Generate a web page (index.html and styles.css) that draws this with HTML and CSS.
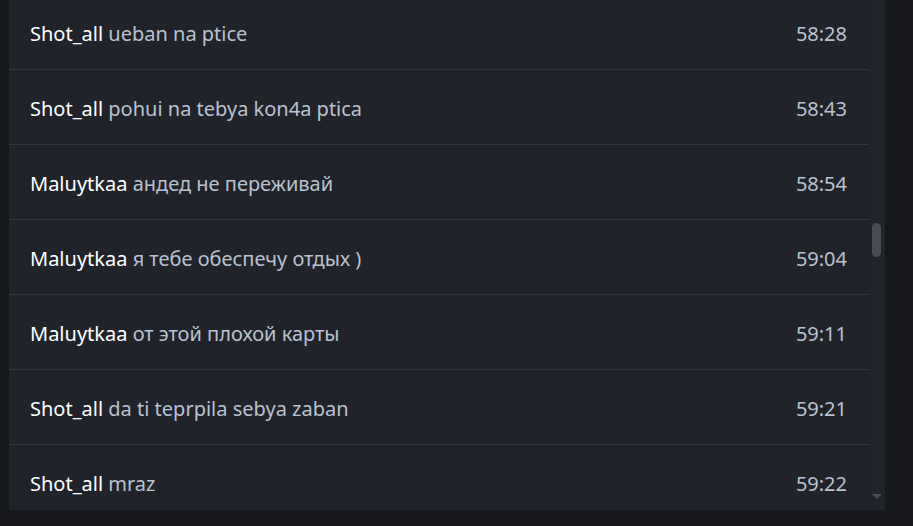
FILE: index.html
```html
<!DOCTYPE html>
<html>
<head>
<meta charset="utf-8">
<link rel="stylesheet" href="styles.css">
</head>
<body>
<div class="panel">
  <div class="list">
    <div class="row"><div class="msg"><span class="name">Shot_all</span> <span class="text">ueban na ptice</span></div><span class="time">58:28</span></div>
    <div class="row"><div class="msg"><span class="name">Shot_all</span> <span class="text">pohui na tebya kon4a ptica</span></div><span class="time">58:43</span></div>
    <div class="row"><div class="msg"><span class="name">Maluytkaa</span> <span class="text">андед не переживай</span></div><span class="time">58:54</span></div>
    <div class="row"><div class="msg"><span class="name">Maluytkaa</span> <span class="text">я тебе обеспечу отдых )</span></div><span class="time">59:04</span></div>
    <div class="row"><div class="msg"><span class="name">Maluytkaa</span> <span class="text">от этой плохой карты</span></div><span class="time">59:11</span></div>
    <div class="row"><div class="msg"><span class="name">Shot_all</span> <span class="text">da ti teprpila sebya zaban</span></div><span class="time">59:21</span></div>
    <div class="row last"><div class="msg"><span class="name">Shot_all</span> <span class="text">mraz</span></div><span class="time">59:22</span></div>
  </div>
  <div class="scrollbar">
    <div class="thumb"></div>
    <div class="arrow"></div>
  </div>
</div>
</body>
</html>
```
FILE: styles.css
```css
html, body {
  margin: 0;
  padding: 0;
  background: #17181c;
  width: 913px;
  height: 526px;
  overflow: hidden;
}
body {
  font-family: "Noto Sans", "Open Sans", sans-serif;
}
.panel {
  margin-left: 9px;
  width: 876px;
  height: 510px;
  background: #21232b;
  display: flex;
  overflow: hidden;
}
.list {
  flex: 1;
  display: flex;
  flex-direction: column;
  margin-top: -5px;
}
.row {
  flex: none;
  height: 75px;
  box-sizing: border-box;
  border-bottom: 1px solid #34363d;
  display: flex;
  align-items: center;
  justify-content: space-between;
  padding: 2px 22px 0 21px;
}
.msg {
  font-size: 20px;
}
.name {
  color: #ffffff;
}
.text, .time {
  color: #b9c2cf;
}
.time {
  font-size: 20px;
}
.scrollbar {
  width: 16px;
  flex: none;
  background: #22242c;
  position: relative;
}
.thumb {
  position: absolute;
  left: 3px;
  top: 223px;
  width: 9px;
  height: 34px;
  border-radius: 5px;
  background: #4a4d55;
}
.arrow {
  position: absolute;
  left: 3px;
  top: 494px;
  width: 0;
  height: 0;
  border-left: 5px solid transparent;
  border-right: 5px solid transparent;
  border-top: 5px solid #4a4d55;
}
```
